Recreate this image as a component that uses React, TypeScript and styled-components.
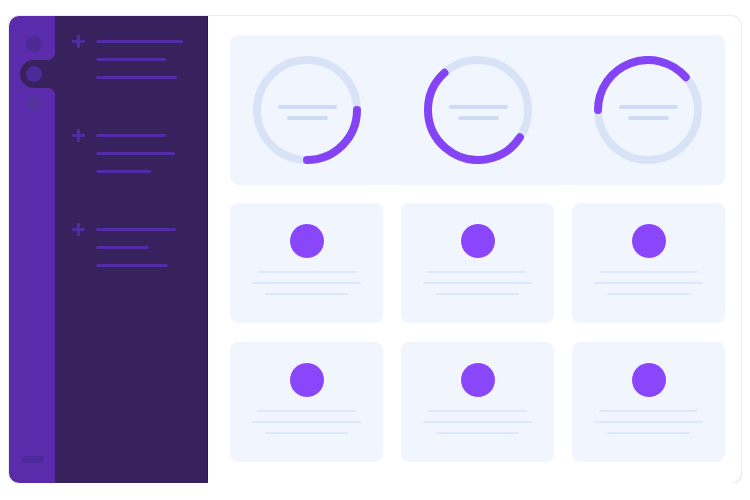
import * as React from "react";
import styled, { createGlobalStyle } from "styled-components";

const GlobalStyle = createGlobalStyle`
  html, body {
    margin: 0;
    padding: 0;
    background: #ffffff;
    font-family: "Inter", "Liberation Sans", sans-serif;
  }
`;

const RAIL = "#5a2bab";
const DARK = "#38225d";

const Frame = styled.div`
  margin: 16px 0 0 9px;
  width: 732px;
  height: 467px;
  display: flex;
  border-radius: 10px;
  overflow: hidden;
  background: #ffffff;
  box-shadow: 0 0 0 1px #ececec, 1px 1px 1px rgba(0, 0, 0, 0.12);
`;

const Rail = styled.div`
  width: 46px;
  flex-shrink: 0;
  background: ${RAIL};
  display: flex;
  flex-direction: column;
  padding-top: 12px;
  box-sizing: border-box;
`;

const RailItem = styled.div<{ active?: boolean }>`
  position: relative;
  height: 28px;
  margin-left: 11px;
  margin-top: 2px;
  padding-left: 6px;
  display: flex;
  align-items: center;
  border-radius: 14px 0 0 14px;
  background: ${(p) => (p.active ? DARK : "transparent")};

  &::before,
  &::after {
    content: "";
    display: ${(p) => (p.active ? "block" : "none")};
    position: absolute;
    right: 0;
    width: 8px;
    height: 8px;
  }
  &::before {
    top: -8px;
    background: radial-gradient(circle at 0 0, ${RAIL} 8px, ${DARK} 8.5px);
  }
  &::after {
    bottom: -8px;
    background: radial-gradient(circle at 0 100%, ${RAIL} 8px, ${DARK} 8.5px);
  }
`;

const RailDot = styled.div<{ tone: string }>`
  width: 16px;
  height: 16px;
  border-radius: 50%;
  background: ${(p) => p.tone};
`;

const RailSpacer = styled.div`
  flex: 1;
`;

const RailPill = styled.div`
  width: 22px;
  height: 7px;
  border-radius: 4px;
  background: #4d2a9a;
  margin: 0 0 20px 13px;
`;

const Sidebar = styled.div`
  width: 153px;
  flex-shrink: 0;
  box-sizing: border-box;
  background: ${DARK};
  border-right: 1px solid #2c1a4b;
  padding: 24px 0 0 17px;
  display: flex;
  flex-direction: column;
  gap: 55px;
`;

const Group = styled.div`
  display: flex;
  align-items: flex-start;
  gap: 11px;
`;

const Plus = styled.div`
  position: relative;
  width: 13px;
  height: 13px;
  margin-top: -5px;
  flex-shrink: 0;

  &::before,
  &::after {
    content: "";
    position: absolute;
    background: #4f2c9f;
    border-radius: 1px;
  }
  &::before {
    left: 0;
    top: 5px;
    width: 13px;
    height: 3px;
  }
  &::after {
    left: 5px;
    top: 0;
    width: 3px;
    height: 13px;
  }
`;

const NavLines = styled.div`
  display: flex;
  flex-direction: column;
  gap: 15px;
`;

const NavLine = styled.div<{ w: number }>`
  width: ${(p) => p.w}px;
  height: 3px;
  border-radius: 2px;
  background: #512ca6;
`;

const Main = styled.div`
  flex: 1;
  padding: 19px 16px 21px 22px;
  display: flex;
  flex-direction: column;
  gap: 18px;
`;

const StatsPanel = styled.div`
  height: 150px;
  border-radius: 8px;
  background: #f1f6fe;
  display: flex;
  align-items: center;
  justify-content: space-between;
  padding: 0 23px;
`;

const CardGrid = styled.div`
  display: grid;
  grid-template-columns: repeat(3, 1fr);
  grid-template-rows: 120px 120px;
  column-gap: 18px;
  row-gap: 19px;
`;

const Card = styled.div`
  border-radius: 8px;
  background: #f1f6fe;
  display: flex;
  flex-direction: column;
  align-items: center;
  padding-top: 20px;
  box-sizing: border-box;
`;

const Avatar = styled.div`
  width: 34px;
  height: 34px;
  border-radius: 50%;
  background: #8a46fb;
  border: 1px solid #ffffff;
  margin-bottom: 12px;
`;

const CardLines = styled.div`
  display: flex;
  flex-direction: column;
  align-items: center;
  gap: 9px;
`;

const CardLine = styled.div<{ w: number }>`
  width: ${(p) => p.w}px;
  height: 2px;
  border-radius: 1px;
  background: #dde9fb;
`;

const point = (deg: number) => {
  const r = (deg * Math.PI) / 180;
  return `${(54 + 50 * Math.cos(r)).toFixed(2)} ${(54 + 50 * Math.sin(r)).toFixed(2)}`;
};

const arcPath = (from: number, to: number) => {
  const large = to - from > 180 ? 1 : 0;
  return `M ${point(from)} A 50 50 0 ${large} 1 ${point(to)}`;
};

const Donut = ({ from, to }: { from: number; to: number }) => (
  <svg width="108" height="108" viewBox="0 0 108 108">
    <circle cx="54" cy="54" r="50" fill="none" stroke="#d9e3f8" strokeWidth="8" />
    <path d={arcPath(from, to)} fill="none" stroke="#8444f5" strokeWidth="8" strokeLinecap="round" />
    <line x1="27" y1="51" x2="82" y2="51" stroke="#cfdaf4" strokeWidth="4" strokeLinecap="round" />
    <line x1="36" y1="62" x2="73" y2="62" stroke="#cfdaf4" strokeWidth="4" strokeLinecap="round" />
  </svg>
);

const navGroups = [
  [87, 70, 81],
  [70, 79, 55],
  [80, 53, 72],
];

const donuts = [
  { from: 0, to: 90 },
  { from: 33, to: 228 },
  { from: 180, to: 319 },
];

export default function App() {
  return (
    <>
      <GlobalStyle />
      <Frame>
        <Rail>
          <RailItem>
            <RailDot tone="#4b2a95" />
          </RailItem>
          <RailItem active>
            <RailDot tone="#4b2b99" />
          </RailItem>
          <RailItem>
            <RailDot tone="#55309f" />
          </RailItem>
          <RailSpacer />
          <RailPill />
        </Rail>
        <Sidebar>
          {navGroups.map((g, i) => (
            <Group key={i}>
              <Plus />
              <NavLines>
                {g.map((w, j) => (
                  <NavLine key={j} w={w} />
                ))}
              </NavLines>
            </Group>
          ))}
        </Sidebar>
        <Main>
          <StatsPanel>
            {donuts.map((d, i) => (
              <Donut key={i} from={d.from} to={d.to} />
            ))}
          </StatsPanel>
          <CardGrid>
            {Array.from({ length: 6 }).map((_, i) => (
              <Card key={i}>
                <Avatar />
                <CardLines>
                  <CardLine w={99} />
                  <CardLine w={109} />
                  <CardLine w={83} />
                </CardLines>
              </Card>
            ))}
          </CardGrid>
        </Main>
      </Frame>
    </>
  );
}
